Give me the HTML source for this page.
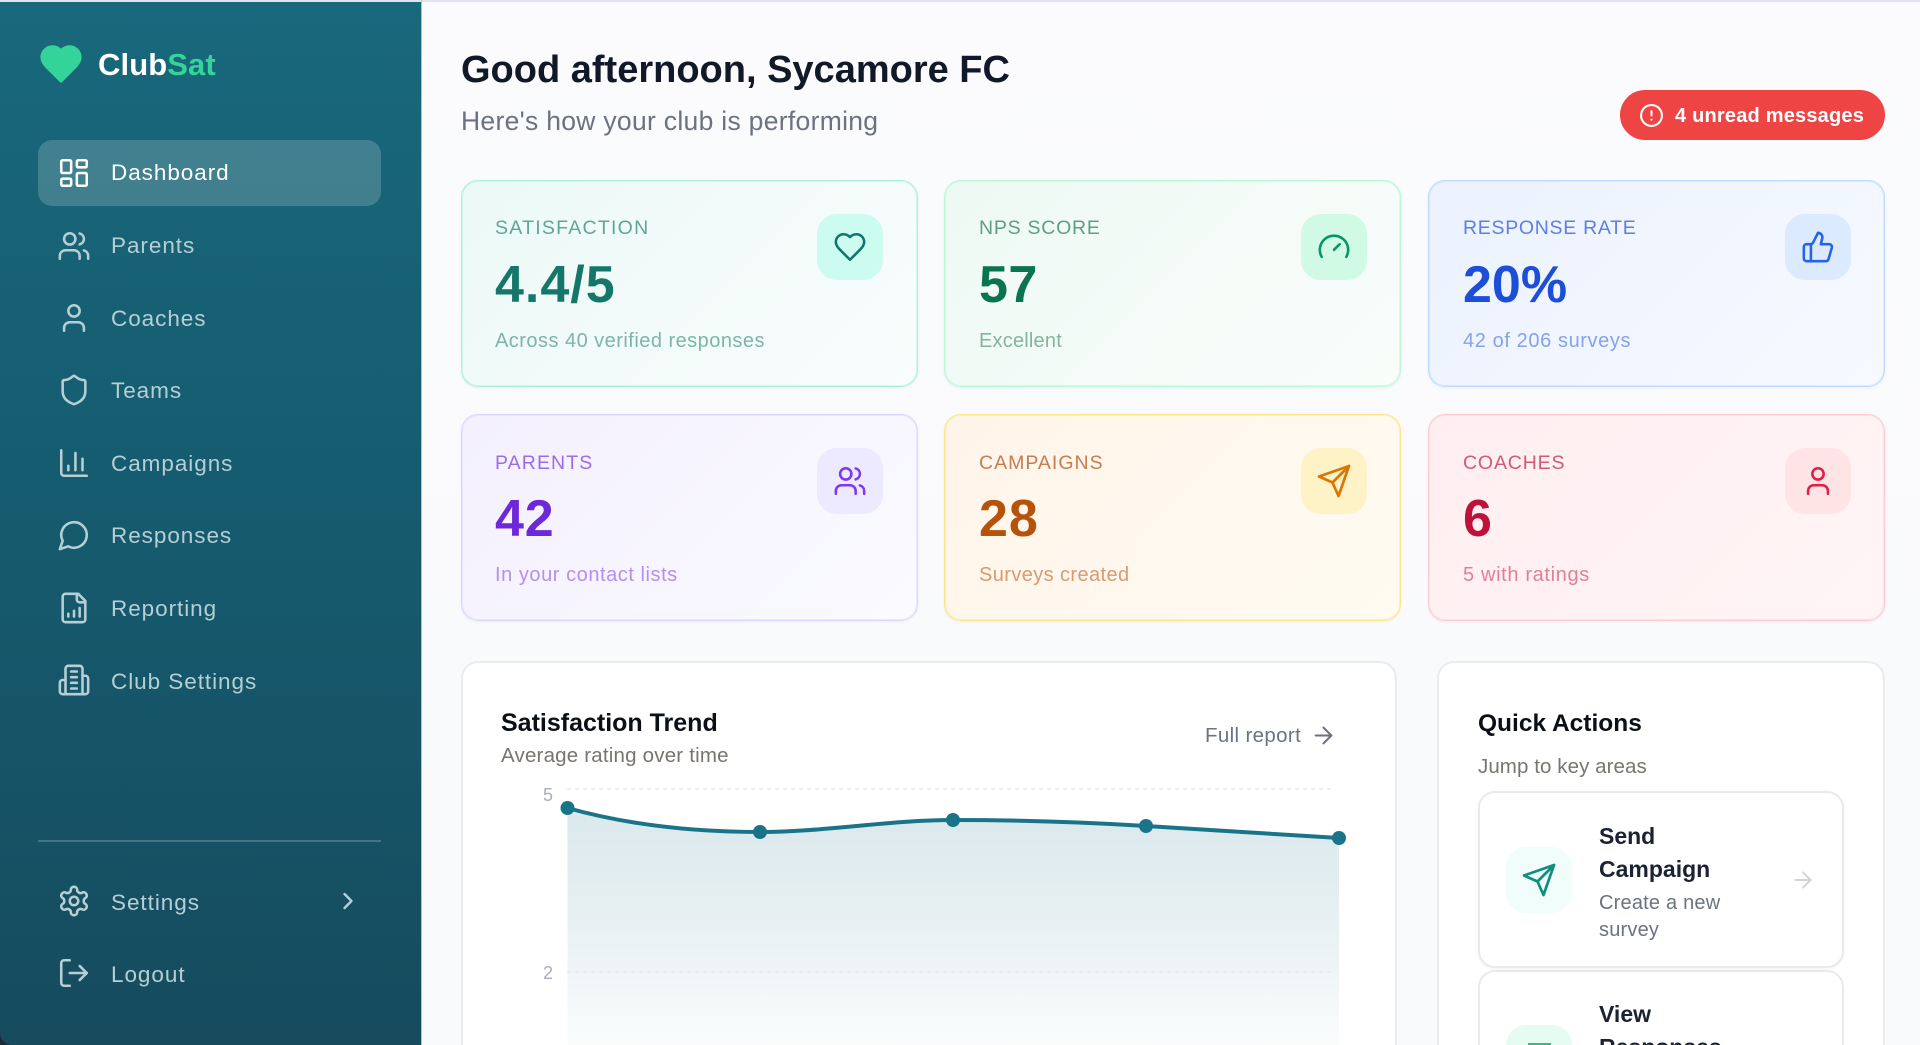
<!DOCTYPE html>
<html lang="en"><head><meta charset="utf-8"><title>ClubSat</title>
<style>
*{box-sizing:border-box;margin:0;padding:0}
html,body{width:1920px;height:1045px;overflow:hidden;background:#f9fafc;font-family:"Liberation Sans",sans-serif}
#root{position:relative;width:1920px;height:1045px;overflow:hidden}
.t{position:absolute;white-space:nowrap;line-height:1}
.a{position:absolute}
svg{position:absolute;fill:none;stroke:currentColor;stroke-width:1.8;stroke-linecap:round;stroke-linejoin:round;overflow:visible}
#side{position:absolute;left:0;top:0;width:421px;height:1045px;background:linear-gradient(180deg,#19687b 0%,#165c70 45%,#164b5e 100%);border-bottom-left-radius:12px}
.n{left:111px;font-size:22.5px;letter-spacing:.95px;color:#b5cfd5}
.ni{left:57px;width:34px;height:34px;color:#b5cfd5}
.card{position:absolute;width:457px;height:207px;border-radius:17px;border:1px solid;box-shadow:0 1px 3px rgba(0,0,0,.05),inset 0 0 0 1px var(--b)}
.lb{font-size:19.5px;letter-spacing:.85px}
.val{font-size:52px;font-weight:700;letter-spacing:.5px}
.sb{font-size:20px;letter-spacing:.47px}
.ib{position:absolute;width:66px;height:66px;border-radius:20px}
.ib svg{left:16px;top:16px;width:34px;height:34px}
.ib svg.s{left:15px;top:15px;width:36px;height:36px}
.panel{position:absolute;background:#fff;border:2px solid #e9ebee;border-bottom:none;border-radius:17px 17px 0 0;top:661px;height:384px}
.act{position:absolute;left:1478px;width:366px;background:#fff;border:2px solid #e8eaed;border-radius:17px;box-shadow:0 1px 3px rgba(0,0,0,.05)}
</style></head><body><div id="root">
<div class="a" style="left:421px;top:0;width:1499px;height:1045px;background:linear-gradient(180deg,#fbfbfd,#f8fafc)"></div>
<div class="a" style="left:0;top:1030px;width:15px;height:15px;background:#1c2b36"></div>
<div id="side"></div>
<div class="a" style="left:0;top:0;width:1920px;height:2px;background:#e1e4ec"></div>
<div class="a" style="left:421px;top:0;width:1px;height:1045px;background:#a9c3cd"></div>

<svg style="left:38px;top:41px;width:46px;height:42px;color:#34d399;fill:#34d399;stroke-width:1.6" viewBox="0 0 24 22"><path d="M19 14c1.49-1.46 3-3.21 3-5.5A5.5 5.5 0 0 0 16.5 3c-1.76 0-3 .5-4.5 2-1.5-1.5-2.74-2-4.5-2A5.5 5.5 0 0 0 2 8.5c0 2.3 1.5 4.05 3 5.5l7 7Z"/></svg>
<div class="t" style="left:98px;top:49px;font-size:31px;font-weight:700;color:#fff;letter-spacing:.1px">Club<span style="color:#34d399">Sat</span></div>

<div class="a" style="left:38px;top:140px;width:343px;height:66px;border-radius:14px;background:rgba(255,255,255,.18)"></div>
<svg class="ni" style="top:156px;color:#fff" viewBox="0 0 24 24"><rect x="3" y="3" width="7" height="9" rx="1"/><rect x="14" y="3" width="7" height="5" rx="1"/><rect x="14" y="12" width="7" height="9" rx="1"/><rect x="3" y="16" width="7" height="5" rx="1"/></svg>
<div class="t n" style="top:162px;color:#fff">Dashboard</div>
<svg class="ni" style="top:229px" viewBox="0 0 24 24"><path d="M16 21v-2a4 4 0 0 0-4-4H6a4 4 0 0 0-4 4v2"/><circle cx="9" cy="7" r="4"/><path d="M22 21v-2a4 4 0 0 0-3-3.87"/><path d="M16 3.13a4 4 0 0 1 0 7.75"/></svg>
<div class="t n" style="top:235px">Parents</div>
<svg class="ni" style="top:301px" viewBox="0 0 24 24"><path d="M19 21v-2a4 4 0 0 0-4-4H9a4 4 0 0 0-4 4v2"/><circle cx="12" cy="7" r="4"/></svg>
<div class="t n" style="top:308px">Coaches</div>
<svg class="ni" style="top:373px" viewBox="0 0 24 24"><path d="M20 13c0 5-3.5 7.5-7.66 8.95a1 1 0 0 1-.67-.01C7.5 20.5 4 18 4 13V6a1 1 0 0 1 1-1c2 0 4.5-1.2 6.24-2.72a1.17 1.17 0 0 1 1.52 0C14.51 3.81 17 5 19 5a1 1 0 0 1 1 1z"/></svg>
<div class="t n" style="top:380px">Teams</div>
<svg class="ni" style="top:446px" viewBox="0 0 24 24"><path d="M3 3v16a2 2 0 0 0 2 2h16"/><path d="M18 17V9"/><path d="M13 17V5"/><path d="M8 17v-3"/></svg>
<div class="t n" style="top:453px">Campaigns</div>
<svg class="ni" style="top:518px" viewBox="0 0 24 24"><path d="M7.9 20A9 9 0 1 0 4 16.1L2 22Z"/></svg>
<div class="t n" style="top:525px">Responses</div>
<svg class="ni" style="top:591px" viewBox="0 0 24 24"><path d="M15 2H6a2 2 0 0 0-2 2v16a2 2 0 0 0 2 2h12a2 2 0 0 0 2-2V7Z"/><path d="M14 2v4a2 2 0 0 0 2 2h4"/><path d="M8 18v-2"/><path d="M12 18v-4"/><path d="M16 18v-6"/></svg>
<div class="t n" style="top:598px">Reporting</div>
<svg class="ni" style="top:663px" viewBox="0 0 24 24"><path d="M6 22V4a2 2 0 0 1 2-2h8a2 2 0 0 1 2 2v18Z"/><path d="M6 12H4a2 2 0 0 0-2 2v6a2 2 0 0 0 2 2h2"/><path d="M18 9h2a2 2 0 0 1 2 2v9a2 2 0 0 1-2 2h-2"/><path d="M10 6h4"/><path d="M10 10h4"/><path d="M10 14h4"/><path d="M10 18h4"/></svg>
<div class="t n" style="top:671px">Club Settings</div>

<div class="a" style="left:38px;top:840px;width:343px;height:2px;background:rgba(255,255,255,.2)"></div>
<svg class="ni" style="top:884px" viewBox="0 0 24 24"><path d="M12.22 2h-.44a2 2 0 0 0-2 2v.18a2 2 0 0 1-1 1.73l-.43.25a2 2 0 0 1-2 0l-.15-.08a2 2 0 0 0-2.73.73l-.22.38a2 2 0 0 0 .73 2.73l.15.1a2 2 0 0 1 1 1.72v.51a2 2 0 0 1-1 1.74l-.15.09a2 2 0 0 0-.73 2.73l.22.38a2 2 0 0 0 2.73.73l.15-.08a2 2 0 0 1 2 0l.43.25a2 2 0 0 1 1 1.73V20a2 2 0 0 0 2 2h.44a2 2 0 0 0 2-2v-.18a2 2 0 0 1 1-1.73l.43-.25a2 2 0 0 1 2 0l.15.08a2 2 0 0 0 2.73-.73l.22-.39a2 2 0 0 0-.73-2.73l-.15-.08a2 2 0 0 1-1-1.74v-.5a2 2 0 0 1 1-1.74l.15-.09a2 2 0 0 0 .73-2.73l-.22-.38a2 2 0 0 0-2.73-.73l-.15.08a2 2 0 0 1-2 0l-.43-.25a2 2 0 0 1-1-1.73V4a2 2 0 0 0-2-2z"/><circle cx="12" cy="12" r="3"/></svg>
<div class="t n" style="top:892px">Settings</div>
<svg class="ni" style="left:334px;top:887px;width:28px;height:28px" viewBox="0 0 24 24"><path d="m9 18 6-6-6-6" stroke-width="2.1"/></svg>
<svg class="ni" style="top:956px" viewBox="0 0 24 24"><path d="M9 21H5a2 2 0 0 1-2-2V5a2 2 0 0 1 2-2h4"/><path d="m16 17 5-5-5-5"/><path d="M21 12H9"/></svg>
<div class="t n" style="top:964px">Logout</div>

<div class="t" style="left:461px;top:51px;font-size:38px;font-weight:700;color:#111827">Good afternoon, Sycamore FC</div>
<div class="t" style="left:461px;top:108px;font-size:26.5px;letter-spacing:.3px;color:#6b7280">Here's how your club is performing</div>

<div class="a" style="left:1620px;top:90px;width:265px;height:50px;border-radius:25px;background:#ef4444"></div>
<svg style="left:1639px;top:103px;width:25px;height:25px;color:#fff;stroke-width:2" viewBox="0 0 24 24"><circle cx="12" cy="12" r="10"/><path d="M12 8v4"/><path d="M12 16h.01"/></svg>
<div class="t" style="left:1675px;top:106px;font-size:20px;font-weight:700;letter-spacing:.2px;color:#fff">4 unread messages</div>

<!-- Row 1 -->
<div class="card" style="--b:#a7f3e080;left:461px;top:180px;border-color:#a7f3e0;background:linear-gradient(135deg,#ecf9f6,#f9fdfd)"></div>
<div class="t lb" style="left:495px;top:219px;color:#5fa696;letter-spacing:1.25px">SATISFACTION</div>
<div class="t val" style="left:495px;top:259px;color:#14776a;letter-spacing:1px">4.4/5</div>
<div class="t sb" style="left:495px;top:331px;color:#7db5a8">Across 40 verified responses</div>
<div class="ib" style="left:817px;top:214px;background:#ccfbef;color:#0f766e"><svg viewBox="0 0 24 24"><path d="M19 14c1.49-1.46 3-3.21 3-5.5A5.5 5.5 0 0 0 16.5 3c-1.76 0-3 .5-4.5 2-1.5-1.5-2.74-2-4.5-2A5.5 5.5 0 0 0 2 8.5c0 2.3 1.5 4.05 3 5.5l7 7Z"/></svg></div>

<div class="card" style="--b:#bbf7d880;left:944px;top:180px;border-color:#bbf7d8;background:linear-gradient(135deg,#eef9f4,#f9fdfb)"></div>
<div class="t lb" style="left:979px;top:219px;color:#609e84;letter-spacing:.75px">NPS SCORE</div>
<div class="t val" style="left:979px;top:259px;color:#0a7350">57</div>
<div class="t sb" style="left:979px;top:331px;color:#83b59e;letter-spacing:.2px">Excellent</div>
<div class="ib" style="left:1301px;top:214px;background:#d1fae5;color:#059669"><svg viewBox="0 0 24 24"><path d="m12 14 4-4"/><path d="M3.34 19a10 10 0 1 1 17.32 0"/></svg></div>

<div class="card" style="--b:#bfdbfe80;left:1428px;top:180px;border-color:#bfdbfe;background:linear-gradient(135deg,#ebf2fe,#f7f9ff)"></div>
<div class="t lb" style="left:1463px;top:219px;color:#5f7fe0;letter-spacing:.7px">RESPONSE RATE</div>
<div class="t val" style="left:1463px;top:259px;color:#1d4ed8;letter-spacing:0">20%</div>
<div class="t sb" style="left:1463px;top:331px;color:#86a2ea;letter-spacing:.6px">42 of 206 surveys</div>
<div class="ib" style="left:1785px;top:214px;background:#dbeafe;color:#2563eb"><svg viewBox="0 0 24 24"><path d="M7 10v12"/><path d="M15 5.88 14 10h5.83a2 2 0 0 1 1.92 2.56l-2.33 8A2 2 0 0 1 17.5 22H4a2 2 0 0 1-2-2v-8a2 2 0 0 1 2-2h2.76a2 2 0 0 0 1.79-1.11L12 2a3.13 3.13 0 0 1 3 3.88Z"/></svg></div>

<!-- Row 2 -->
<div class="card" style="--b:#ddd6fe80;left:461px;top:414px;border-color:#ddd6fe;background:linear-gradient(135deg,#f4f0fe,#fafaff)"></div>
<div class="t lb" style="left:495px;top:454px;color:#9b6ce8;letter-spacing:1.1px">PARENTS</div>
<div class="t val" style="left:495px;top:493px;color:#6d28d9;letter-spacing:.8px">42</div>
<div class="t sb" style="left:495px;top:565px;color:#b48ef0;letter-spacing:.55px">In your contact lists</div>
<div class="ib" style="left:817px;top:448px;background:#ede9fe;color:#7c3aed"><svg viewBox="0 0 24 24"><path d="M16 21v-2a4 4 0 0 0-4-4H6a4 4 0 0 0-4 4v2"/><circle cx="9" cy="7" r="4"/><path d="M22 21v-2a4 4 0 0 0-3-3.87"/><path d="M16 3.13a4 4 0 0 1 0 7.75"/></svg></div>

<div class="card" style="--b:#fde68a80;left:944px;top:414px;border-color:#fde68a;background:linear-gradient(135deg,#fff4ea,#fffbf1)"></div>
<div class="t lb" style="left:979px;top:454px;color:#c97c50;letter-spacing:1px">CAMPAIGNS</div>
<div class="t val" style="left:979px;top:493px;color:#b45309;letter-spacing:1px">28</div>
<div class="t sb" style="left:979px;top:565px;color:#d99a6e;letter-spacing:.4px">Surveys created</div>
<div class="ib" style="left:1301px;top:448px;background:#fef3c7;color:#d97706"><svg class="s" viewBox="0 0 24 24"><path d="m22 2-7 20-4-9-9-4Z"/><path d="M22 2 11 13"/></svg></div>

<div class="card" style="--b:#fecdd380;left:1428px;top:414px;border-color:#fecdd3;background:linear-gradient(135deg,#ffeef1,#fff5f6)"></div>
<div class="t lb" style="left:1463px;top:454px;color:#d05a78;letter-spacing:.85px">COACHES</div>
<div class="t val" style="left:1463px;top:493px;color:#be123c">6</div>
<div class="t sb" style="left:1463px;top:565px;color:#e08098;letter-spacing:.65px">5 with ratings</div>
<div class="ib" style="left:1785px;top:448px;background:#ffe4e6;color:#e11d48"><svg viewBox="0 0 24 24"><path d="M19 21v-2a4 4 0 0 0-4-4H9a4 4 0 0 0-4 4v2"/><circle cx="12" cy="7" r="4"/></svg></div>

<!-- Chart -->
<div class="panel" style="left:461px;width:936px"></div>
<div class="t" style="left:501px;top:711px;font-size:25px;font-weight:700;color:#0a0f18">Satisfaction Trend</div>
<div class="t" style="left:501px;top:746px;font-size:20.5px;letter-spacing:.2px;color:#78746f">Average rating over time</div>
<div class="t" style="left:1205px;top:726px;font-size:20.5px;letter-spacing:.35px;color:#6b7280">Full report</div>
<svg style="left:1309.5px;top:721.5px;width:27px;height:27px;color:#6b7280" viewBox="0 0 24 24"><path d="M5 12h14"/><path d="m12 5 7 7-7 7"/></svg>

<svg style="left:0;top:0;width:1920px;height:1045px;stroke-linecap:butt;overflow:hidden" viewBox="0 0 1920 1045">
<defs><linearGradient id="g" x1="0" y1="808" x2="0" y2="1045" gradientUnits="userSpaceOnUse"><stop offset="0" stop-color="#1a6f87" stop-opacity=".16"/><stop offset=".5" stop-color="#1a6f87" stop-opacity=".1"/><stop offset="1" stop-color="#1a6f87" stop-opacity=".02"/></linearGradient></defs>
<path d="M567.5 808C632 826 696 832 760 832C824 832 889 820 953 820C1017 820 1082 822 1146 826C1210 830 1275 834 1339 838V1045H567.5Z" fill="url(#g)" stroke="none"/>
<path d="M567 789H1335M567 972H1335" stroke="#e6eaee" stroke-width="1.5" stroke-dasharray="4 4"/>
<path d="M567.5 808C632 826 696 832 760 832C824 832 889 820 953 820C1017 820 1082 822 1146 826C1210 830 1275 834 1339 838" stroke="#1a7489" stroke-width="4"/>
<g fill="#1a7489" stroke="none"><circle cx="567.5" cy="808" r="7"/><circle cx="760" cy="832" r="7"/><circle cx="953" cy="820" r="7"/><circle cx="1146" cy="826" r="7"/><circle cx="1339" cy="838" r="7"/></g>
</svg>
<div class="t" style="left:543px;top:786px;font-size:18px;color:#a9aeba">5</div>
<div class="t" style="left:543px;top:964px;font-size:18px;color:#a9aeba">2</div>

<!-- Quick actions -->
<div class="panel" style="left:1437px;width:448px"></div>
<div class="t" style="left:1478px;top:712px;font-size:24.5px;font-weight:700;color:#0a0f18">Quick Actions</div>
<div class="t" style="left:1478px;top:757px;font-size:20.5px;letter-spacing:.08px;color:#78746f">Jump to key areas</div>

<div class="act" style="top:791px;height:177px"></div>
<div class="ib" style="left:1506px;top:847px;background:#f0fdfa;color:#0f8f7d"><svg class="s" viewBox="0 0 24 24"><path d="m22 2-7 20-4-9-9-4Z"/><path d="M22 2 11 13"/></svg></div>
<div class="t" style="left:1599px;top:825px;font-size:23px;font-weight:700;color:#1a2233">Send</div>
<div class="t" style="left:1599px;top:858px;font-size:23px;font-weight:700;color:#1a2233">Campaign</div>
<div class="t" style="left:1599px;top:893px;font-size:20px;letter-spacing:.2px;color:#6b7280">Create a new</div>
<div class="t" style="left:1599px;top:920px;font-size:20px;letter-spacing:.2px;color:#6b7280">survey</div>
<svg style="left:1790px;top:867px;width:26px;height:26px;color:#d1d5db" viewBox="0 0 24 24"><path d="M5 12h14"/><path d="m12 5 7 7-7 7"/></svg>

<div class="act" style="top:970px;height:75px;border-bottom:none;border-radius:17px 17px 0 0;box-shadow:none"></div>
<div class="a" style="left:1506px;top:1025px;width:66px;height:20px;border-radius:20px 20px 0 0;background:#e6fbf1"></div>
<div class="a" style="left:1528px;top:1043px;width:23px;height:2px;background:#3fb68a"></div>
<div class="t" style="left:1599px;top:1003px;font-size:23px;font-weight:700;color:#1a2233">View</div>
<div class="a" style="left:1599px;top:1036px;width:180px;height:9px;overflow:hidden"><div class="t" style="left:0;top:0;font-size:23px;font-weight:700;color:#1a2233">Responses</div></div>
</div></body></html>
